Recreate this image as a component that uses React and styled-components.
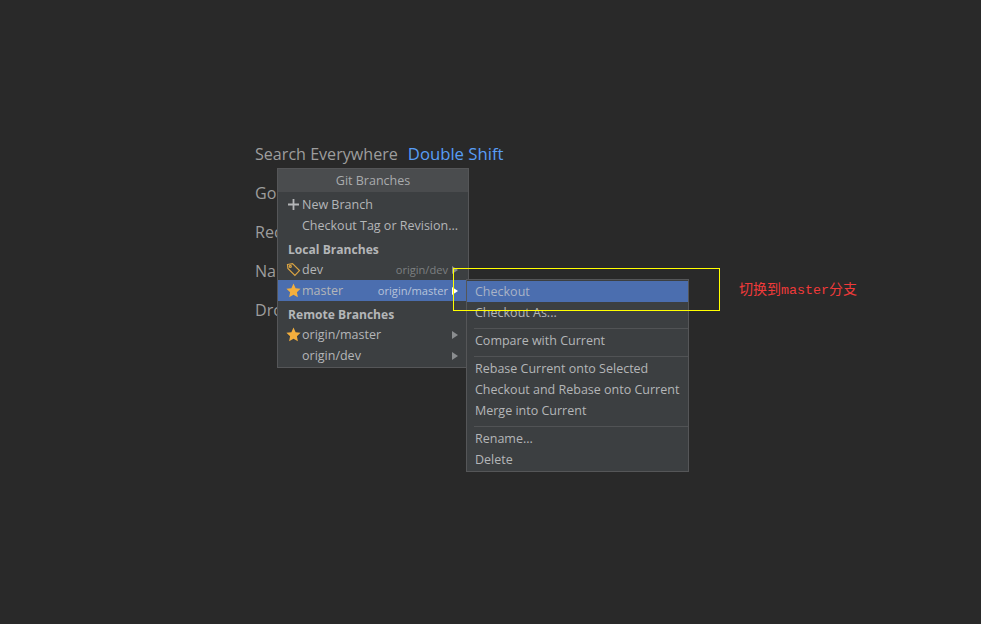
import styled, { createGlobalStyle } from "styled-components"

const GlobalStyle = createGlobalStyle`
    html, body {
        margin: 0;
        padding: 0;
        background: #292929;
    }
`

const Page = styled.div`
    position: relative;
    width: 981px;
    height: 624px;
    overflow: hidden;
    background: #292929;
    font-family: "Open Sans", "Noto Sans", sans-serif;
`

const Hints = styled.div`
    display: flex;
    flex-direction: column;
    padding: 143px 0 0 255px;
`

const Hint = styled.div`
    display: flex;
    gap: 10px;
    height: 39px;
    font-size: 16.1px;
    line-height: 22px;
    color: #9d9d9d;
`

const Shortcut = styled.span`
    color: #589df6;
    font-size: 16.7px;
`

const Popup = styled.div`
    position: absolute;
    left: ${(p) => p.$left}px;
    top: ${(p) => p.$top}px;
    width: ${(p) => p.$width}px;
    box-sizing: border-box;
    padding: ${(p) => (p.$top === 279 ? 1 : 0)}px 0 1px;
    background: #3c3f41;
    border: 1px solid #555658;
    font-size: 12.5px;
    color: #b4b6b8;
`

const PopupTitle = styled.div`
    height: 23px;
    line-height: 23px;
    margin-bottom: 2px;
    text-align: center;
    background: #4a4c4e;
    color: #a9abad;
`

const Row = styled.div`
    display: flex;
    align-items: center;
    height: 21px;
    padding: 0 10px 0 ${(p) => (p.$sub ? 8 : 7)}px;
    white-space: nowrap;
    background: ${(p) => (p.$active ? "#4b6eaf" : "transparent")};
    color: ${(p) => (p.$dim ? "#a9b3c6" : "inherit")};
`

const IconSlot = styled.span`
    display: flex;
    align-items: center;
    justify-content: center;
    width: 17px;
    height: 16px;
    flex: none;
`

const Label = styled.span`
    flex: 1;
    white-space: nowrap;
`

const Remote = styled.span`
    font-size: 11.1px;
    color: ${(p) => (p.$active ? "#b7c3da" : "#7d8082")};
    margin-right: 4px;
`

const Arrow = styled.span`
    width: 0;
    height: 0;
    border-left: 6px solid ${(p) => (p.$active ? "#ffffff" : "#8a8d8f")};
    border-top: 4px solid transparent;
    border-bottom: 4px solid transparent;
`

const Section = styled.div`
    height: 23px;
    line-height: 28px;
    padding-left: 10px;
    font-size: 12.1px;
    font-weight: 700;
    color: #b4b6b8;
`

const Separator = styled.div`
    height: 1px;
    margin: 5px 0 1px 7px;
    background: #515355;
`

const Callout = styled.div`
    position: absolute;
    left: 453px;
    top: 268px;
    width: 267px;
    height: 43px;
    box-sizing: border-box;
    border: 1px solid #ffff00;
`

const Note = styled.div`
    position: absolute;
    left: 739px;
    top: 280px;
    font-family: "Noto Sans CJK SC", sans-serif;
    font-size: 14px;
    line-height: 17px;
    color: #f03a3a;
`

const NoteMono = styled.span`
    font-family: "Liberation Mono", monospace;
    font-size: 13.33px;
`

const Star = () => (
    <svg width="15" height="15" viewBox="0 0 15 15">
        <path d="M7.5 .6l2.1 4.6 5 .6-3.7 3.4 1 5-4.4-2.5-4.4 2.5 1-5L.4 5.8l5-.6z" fill="#f4af3d" />
    </svg>
)

const Tag = () => (
    <svg width="15" height="15" viewBox="0 0 15 15" fill="none" stroke="#d9a343" strokeWidth="1.2">
        <path d="M1.5 2.5l5-.9 7 7-4.6 4.8-7-7z" />
        <circle cx="4.3" cy="4.4" r="1" />
    </svg>
)

const Plus = () => (
    <svg width="11" height="11" viewBox="0 0 11 11">
        <path d="M4.6 0h1.8v4.6H11v1.8H6.4V11H4.6V6.4H0V4.6h4.6z" fill="#b4b6b8" />
    </svg>
)

const BranchRow = ({ icon, name, remote, active }) => (
    <Row $active={active}>
        <IconSlot>{icon}</IconSlot>
        <Label>{name}</Label>
        {remote && <Remote $active={active}>{remote}</Remote>}
        <Arrow $active={active} />
    </Row>
)

const App = () => {
    return (
        <Page>
            <GlobalStyle />
            <Hints>
                <Hint>
                    Search Everywhere <Shortcut>Double Shift</Shortcut>
                </Hint>
                <Hint>Go</Hint>
                <Hint>Rec</Hint>
                <Hint>Na</Hint>
                <Hint>Dro</Hint>
            </Hints>

            <Popup $left={277} $top={168} $width={192}>
                <PopupTitle>Git Branches</PopupTitle>
                <Row>
                    <IconSlot><Plus /></IconSlot>
                    <Label>New Branch</Label>
                </Row>
                <Row>
                    <IconSlot />
                    <Label>Checkout Tag or Revision...</Label>
                </Row>
                <Section>Local Branches</Section>
                <BranchRow icon={<Tag />} name="dev" remote="origin/dev" />
                <BranchRow icon={<Star />} name="master" remote="origin/master" active />
                <Section>Remote Branches</Section>
                <BranchRow icon={<Star />} name="origin/master" />
                <BranchRow name="origin/dev" />
            </Popup>

            <Popup $left={466} $top={279} $width={223}>
                <Row $sub $active $dim>Checkout</Row>
                <Row $sub>Checkout As...</Row>
                <Separator />
                <Row $sub>Compare with Current</Row>
                <Separator />
                <Row $sub>Rebase Current onto Selected</Row>
                <Row $sub>Checkout and Rebase onto Current</Row>
                <Row $sub>Merge into Current</Row>
                <Separator />
                <Row $sub>Rename...</Row>
                <Row $sub>Delete</Row>
            </Popup>

            <Callout />
            <Note>切换到<NoteMono>master</NoteMono>分支</Note>
        </Page>
    )
}

export default App
